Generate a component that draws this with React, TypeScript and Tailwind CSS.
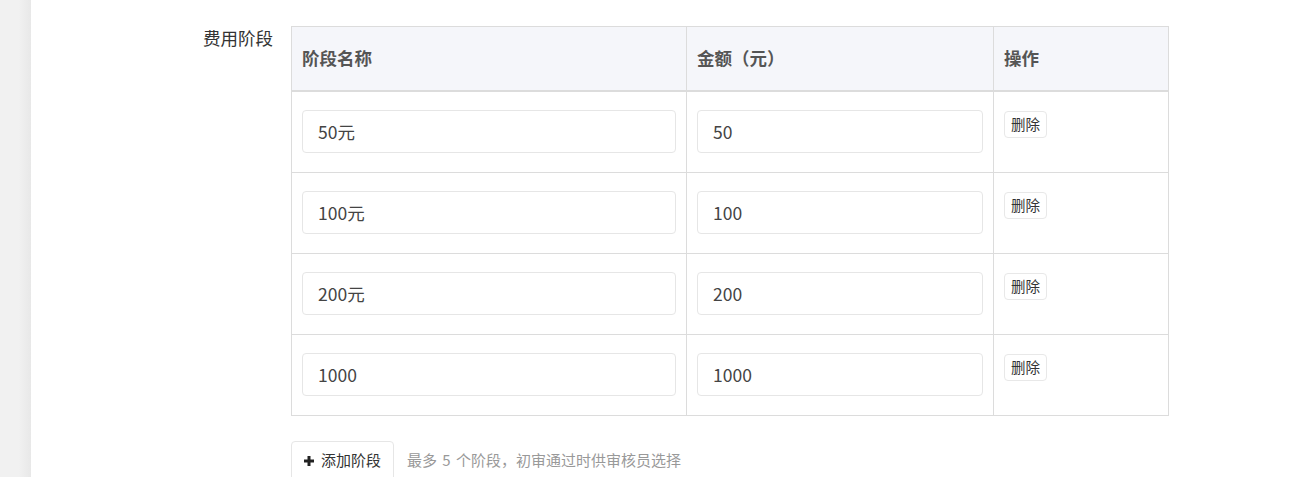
import React from "react";

type Stage = { name: string; amount: string };

const stages: Stage[] = [
  { name: "50元", amount: "50" },
  { name: "100元", amount: "100" },
  { name: "200元", amount: "200" },
  { name: "1000", amount: "1000" },
];

const font = "font-['Noto_Sans_CJK_SC','Noto_Sans',sans-serif]";

function TextField({ value }: { value: string }) {
  return (
    <input
      readOnly
      value={value}
      className={`block h-[43px] w-full rounded-[4px] border border-[#e6e6e6] bg-white pl-[15px] text-[17.5px] text-[#444] outline-none ${font}`}
    />
  );
}

export default function App() {
  return (
    <div className={`flex min-h-[477px] w-full bg-white ${font}`}>
      <div className="w-[31px] shrink-0 bg-[linear-gradient(to_right,#f1f1f1_60%,#e8e8e8)]" />
      <div className="flex flex-1 items-start pt-[26px]">
        <div className="w-[242px] shrink-0 text-right text-[17.5px] leading-[24px] text-[#333]">
          费用阶段
        </div>
        <div className="ml-[18px] flex flex-col">
          <table className="w-[877px] table-fixed border-collapse border border-[#dcdcdc]">
            <colgroup>
              <col className="w-[395px]" />
              <col className="w-[307px]" />
              <col className="w-[175px]" />
            </colgroup>
            <thead>
              <tr className="h-[64px] border-b-2 border-[#dcdcdc] bg-[#f5f6fa]">
                <th className="border-r border-[#dcdcdc] px-[10px] text-left text-[17.5px] font-bold text-[#555]">
                  阶段名称
                </th>
                <th className="border-r border-[#dcdcdc] px-[10px] text-left text-[17.5px] font-bold text-[#555]">
                  金额（元）
                </th>
                <th className="px-[10px] text-left text-[17.5px] font-bold text-[#555]">
                  操作
                </th>
              </tr>
            </thead>
            <tbody>
              {stages.map((s, i) => (
                <tr key={i} className="border-b border-[#dcdcdc]">
                  <td className="border-r border-[#dcdcdc] px-[10px] pt-[18px] pb-[19px] align-top">
                    <TextField value={s.name} />
                  </td>
                  <td className="border-r border-[#dcdcdc] px-[10px] pt-[18px] pb-[19px] align-top">
                    <TextField value={s.amount} />
                  </td>
                  <td className="px-[10px] pt-[19px] align-top">
                    <button className="flex h-[27px] items-center rounded-[4px] border border-[#e8e8e8] bg-white px-[6px] text-[14.5px] leading-none text-[#333]">
                      删除
                    </button>
                  </td>
                </tr>
              ))}
            </tbody>
          </table>
          <div className="mt-[25px] flex items-center">
            <button className="flex h-[40px] w-[103px] items-center justify-center gap-[7px] rounded-[4px] border border-[#e6e6e6] bg-white text-[15px] text-[#333]">
              <svg width="10" height="10" viewBox="0 0 10 10" aria-hidden="true">
                <path d="M5 0v10M0 5h10" stroke="#222" strokeWidth="3" />
              </svg>
              添加阶段
            </button>
            <span className="ml-[13px] text-[15px] text-[#999] [word-spacing:2px]">
              最多 5 个阶段，初审通过时供审核员选择
            </span>
          </div>
        </div>
      </div>
    </div>
  );
}
